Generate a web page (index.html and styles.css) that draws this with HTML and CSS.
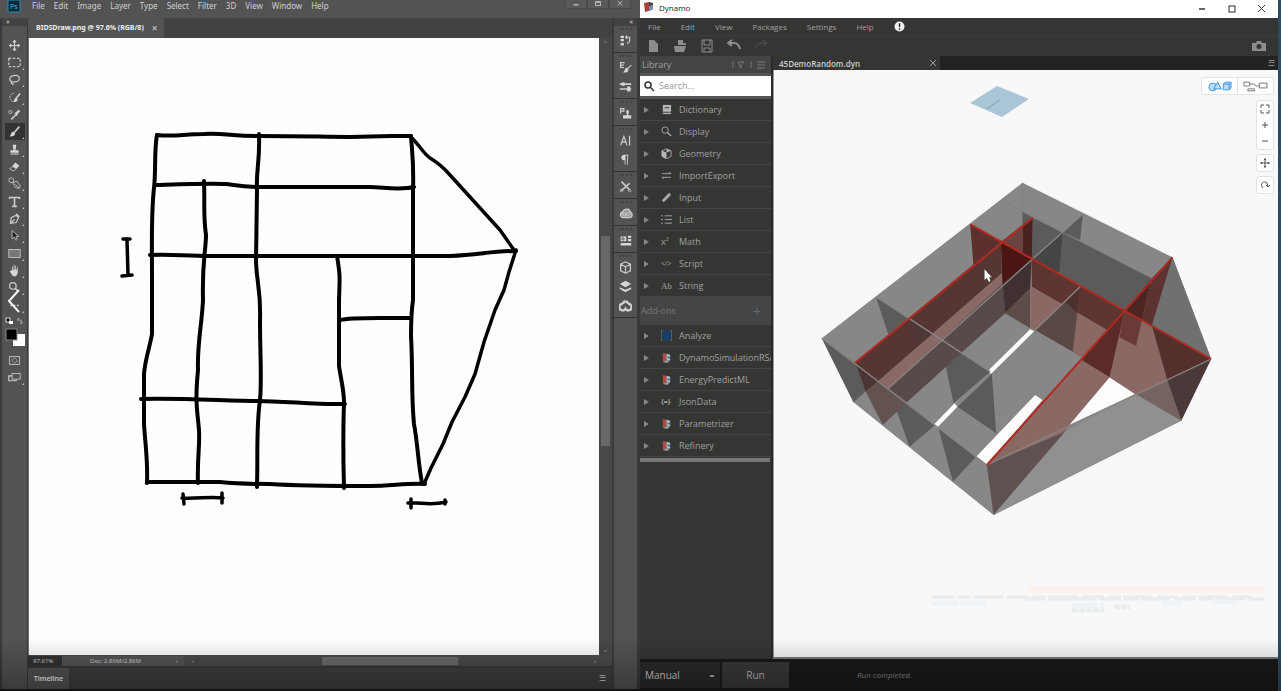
FILE: index.html
```
<!DOCTYPE html>
<html lang="en">
<head>
  <meta charset="UTF-8">
  <title>BIDSDraw.png / Dynamo</title>
  <link rel="stylesheet" href="styles.css">
</head>
<body>
  <div class="desktop">

    <!-- Photoshop -->
    <section class="ps">
      <header class="ps-header">
        <svg class="ps-logo" viewBox="0 0 14 14"><rect x="1" y="0" width="12" height="12" rx="1" fill="#0a2a3c" stroke="#2f86ab"/><text x="3" y="9" font-size="7" fill="#4fb4dd">Ps</text></svg>
        <nav class="ps-menu">
          <button>File</button><button>Edit</button><button>Image</button><button>Layer</button><button>Type</button><button>Select</button><button>Filter</button><button>3D</button><button>View</button><button>Window</button><button>Help</button>
        </nav>
        <div class="ps-window">
          <button aria-label="Minimize"><svg viewBox="0 0 10 10"><path d="M2 6h6" stroke-width="1.5"/></svg></button>
          <button aria-label="Maximize"><svg viewBox="0 0 10 10"><rect x="2" y="2" width="6" height="5"/><path d="M2 3h6"/></svg></button>
          <button aria-label="Close"><svg viewBox="0 0 10 10"><path d="M2 1l6 6M8 1l-6 6"/></svg></button>
        </div>
      </header>

      <div class="ps-body">
        <div class="ps-tools">
          <div class="grip">&raquo;</div>
          <button aria-label="Move"><svg class="ico" viewBox="0 0 16 16"><path d="M8 2v12M2 8h12M6 4l2-2 2 2M6 12l2 2 2-2M4 6L2 8l2 2M12 6l2 2-2 2" stroke-width="1.5"/></svg></button>
          <button aria-label="Marquee" class="more"><svg class="ico" viewBox="0 0 16 16"><rect x="1" y="3" width="14" height="10" stroke-dasharray="3 2" stroke-width="1.5"/></svg></button>
          <button aria-label="Lasso" class="more"><svg class="ico" viewBox="0 0 16 16"><path d="M5 11C0 9 2 3 9 3c6 0 7 7 0 8-3 0-5-1-5 1s3 0 2 3" stroke-width="1.5"/></svg></button>
          <button aria-label="Quick selection" class="more"><svg class="ico" viewBox="0 0 16 16"><path d="M7 3C1 2 1 12 6 13" stroke-dasharray="2 1"/><path d="M15 3l-5 6" stroke-width="2"/><path class="f" d="M10 8l2 2c-1 4-4 4-6 3 2-1 2-4 4-5z"/></svg></button>
          <button aria-label="Eyedropper"><svg class="ico" viewBox="0 0 16 16"><circle cx="3" cy="5" r="2"/><path d="M4 14l6-6" stroke-width="2"/><path class="f" d="M8 6l2-1 3-3 2 2-3 3-1 3z"/></svg></button>
          <button aria-label="Brush" class="more on"><svg class="ico" viewBox="0 0 16 16"><path d="M14 2L8 9" stroke-width="2"/><path class="f" d="M7 8l2 2c-1 4-4 4-7 4 2-2 2-6 5-6z"/></svg></button>
          <button aria-label="Stamp" class="more"><svg class="ico" viewBox="0 0 16 16"><path class="f" d="M6 2h4v3l-1 4h4v3H3V9h4L6 5zM3 13h10v1H3z"/></svg></button>
          <button aria-label="Eraser" class="more"><svg class="ico" viewBox="0 0 16 16"><path class="f" d="M9 3l5 4-4 4-5-3z"/><path d="M5 8l-3 3 3 2h3l2-2"/></svg></button>
          <button aria-label="Paint" class="more"><svg class="ico" viewBox="0 0 16 16"><circle cx="4" cy="4" r="3"/><path d="M6 7l5-2 4 6-1 3-5-1zM9 9l4 4"/></svg></button>
          <button aria-label="Type" class="more"><svg class="ico" viewBox="0 0 16 16"><path d="M2 5V3h12v2M8 3v11M5 14h6" stroke-width="2"/></svg></button>
          <button aria-label="Pen" class="more"><svg class="ico" viewBox="0 0 16 16"><path d="M3 14l1-7 6-3 3 3-3 6zM3 14l5-5M10 2l4 4" stroke-width="1.5"/></svg></button>
          <button aria-label="Path selection" class="more"><svg class="ico" viewBox="0 0 16 16"><path d="M5 2v10l3-2 2 4 1-1-1-4h3z" fill="#222"/></svg></button>
          <button aria-label="Rectangle" class="more"><svg class="ico" viewBox="0 0 16 16"><rect x="1" y="3" width="14" height="10" fill="#777"/></svg></button>
          <button aria-label="Hand" class="more"><svg class="ico" viewBox="0 0 16 16"><path class="f" d="M5 8V3h1v4h1V1h1v6h1V2h1v5h1V4h1v7l-2 4H6L2 9l1-1z"/></svg></button>
          <button aria-label="Zoom" class="more"><svg class="ico" viewBox="0 0 16 16"><circle cx="6" cy="6" r="4" stroke-width="1.5"/><path d="M9 9l4 4" stroke-width="2"/></svg></button>
          <button aria-label="Edit toolbar" class="more"><svg class="ico" viewBox="0 0 16 16"><path class="f" d="M3 7h2v2H3zM7 7h2v2H7zM11 7h2v2h-2z"/></svg></button>
          <svg class="swatches" viewBox="0 0 24 30"><rect x="3" y="1" width="4" height="4" fill="#000" stroke="#ddd"/><rect x="6" y="4" width="4" height="3" fill="#fff"/><path d="M14 3h4v4M14 3l2-2M18 7l2-2" fill="none" stroke="#aaa"/><rect x="10" y="17" width="12" height="12" fill="#fff"/><rect x="3" y="12" width="11" height="11" fill="#000" stroke="#888"/></svg>
          <button aria-label="Quick mask"><svg class="ico" viewBox="0 0 16 16"><rect x="2" y="3" width="12" height="10"/><circle cx="8" cy="8" r="3" stroke-dasharray="2 1"/></svg></button>
          <button aria-label="Screen mode" class="more"><svg class="ico" viewBox="0 0 16 16"><rect x="5" y="3" width="10" height="7"/><path d="M5 6H1v6h9v-2" stroke-width="1.5"/></svg></button>
          <svg class="chevron" viewBox="0 0 14 26"><path d="M12 2L2 13l10 11"/></svg>
        </div>

        <div class="ps-doc">
          <div class="ps-tabs"><div class="ps-tab">BIDSDraw.png @ 97.6% (RGB/8) <button aria-label="Close document">&times;</button></div></div>
          <div class="ps-canvas-row">
            <div class="ps-canvas">
              <svg class="sketch" viewBox="29 38 570 617">
                <path d="M157 135C174 137 184 134 204 134C224 133 232 136 258 136C310 136 322 137 350 137L392 136L411 136"/>
                <path d="M157 135C154 150 156 172 154 188C151 214 152 240 152 280L152 334C150 346 145 360 144 374L144 424C145 442 148 460 147 483"/>
                <path d="M155 185C186 184 210 183 226 184C240 186 244 187 260 187L370 187C390 188 402 190 414 187"/>
                <path d="M150 255C172 254 184 256 212 256L450 256C480 255 490 251 516 251"/>
                <path d="M204 181C205 206 203 214 206 235C206 250 202 260 203 300C202 324 197 344 198 370C195 402 197 408 199 430C200 446 197 460 198 483"/>
                <path d="M259 134C260 164 256 168 257 190L256 262C257 286 261 290 260 320C260 354 262 380 260 400C256 428 258 452 257 487"/>
                <path d="M337 256C340 274 340 276 339 300L339 366C341 380 344 390 344 402C343 430 343 452 344 488"/>
                <path d="M411 136C412 152 414 162 413 190L413 300C411 314 411 322 411 336C413 370 411 394 414 424C418 446 418 462 422 483"/>
                <path d="M340 320C350 317 372 318 410 318"/>
                <path d="M141 399C184 398 228 401 256 401C286 401 316 405 345 404"/>
                <path d="M147 482L220 482C240 484 250 484 270 484C300 486 340 486 370 486C392 486 406 483 425 484"/>
                <path d="M411 137C420 146 424 154 430 158C440 164 444 168 450 175L500 230L514 250" stroke-width="3.5"/>
                <path d="M516 250L509 272L504 290L495 310L484 342L475 374L465 397L452 422L443 444L431 468L424 484" stroke-width="3.5"/>
                <path d="M123 239l7 0M127 240l1 34M122 276l10-1" stroke-width="3.5"/>
                <path d="M183 494l1 10M222 493l0 10M182 498C198 499 210 496 223 498" stroke-width="3.5"/>
                <path d="M411 499l0 9M445 500l0 4M408 503C420 502 430 506 446 502" stroke-width="3.5"/>
              </svg>
            </div>
            <div class="ps-vscroll"><span>&#8963;</span><i></i><span>&#8964;</span></div>
          </div>
          <div class="ps-status">
            <span class="zoom">97.61%</span><span class="size">Doc: 2.86M/2.86M</span><span class="arrow">&rsaquo;</span><span>&lsaquo;</span>
            <div class="track"><i></i></div><span>&rsaquo;</span>
          </div>
          <div class="ps-timeline"><button>Timeline</button><span>&#9776;</span></div>
        </div>

        <div class="ps-dock">
          <div class="grip right">&laquo;</div>
          <div class="dock-group"><svg class="ico" viewBox="0 0 16 16"><path class="f" d="M2 2h4v3H2zM2 6h4v3H2zM2 11h4v3H2z"/><path d="M8 4h5v5l-3 3M8 4l2-2M8 4l2 2" stroke-width="1.5"/></svg></div>
          <div class="dock-group"><svg class="ico" viewBox="0 0 16 16"><path d="M7 2H2v6h4M2 5h4M15 5l-5 5" stroke-width="1.5"/><path class="f" d="M9 8l3 3c-2 4-4 3-7 3 2-1 2-5 4-6z"/></svg><svg class="ico" viewBox="0 0 16 16"><path d="M1 5h14M1 11h14" stroke-width="2"/><path class="f" d="M3 3h4v4H3zM10 8h4v6h-4z"/></svg></div>
          <div class="dock-group"><svg class="ico" viewBox="0 0 16 16"><path d="M2 8V2h4v3H2" stroke-width="1.5"/><path class="f" d="M9 4h3v3l-1 3h4v4H5v-4h5L9 7z"/></svg></div>
          <div class="dock-group"><svg class="ico" viewBox="0 0 16 16"><path d="M2 14L6 3l4 11M4 10h5M13 2v12" stroke-width="1.5"/></svg><svg class="ico" viewBox="0 0 16 16"><path class="f" d="M12 2H7C1 2 2 9 7 9v5h1V3h2v11h1V3h1z"/></svg></div>
          <div class="dock-group"><svg class="ico" viewBox="0 0 16 16"><path d="M3 2l10 10M13 4L3 13" stroke-width="2"/><circle cx="3" cy="13" r="1.5"/><circle cx="13" cy="13" r="1.5"/></svg></div>
          <div class="dock-group"><svg class="ico wide" viewBox="0 0 16 16"><path d="M5 13C0 13 0 7 4 6c2-5 9-4 9 0 4 2 3 7-1 7z" fill="#999" stroke-width="1.5"/><circle cx="6" cy="9" r="2"/><circle cx="10" cy="9" r="2"/></svg></div>
          <div class="dock-group"><svg class="ico" viewBox="0 0 16 16"><path class="f" d="M2 3h7v6H2zM11 2h4v3h-4zM11 6h4v3h-4zM2 11h13v3H2z"/><circle cx="5" cy="6" r="1.5" stroke="#444"/></svg></div>
          <div class="dock-group"><svg class="ico" viewBox="0 0 16 16"><path d="M8 1l6 3v8l-6 3-6-3V4zM2 4l6 3 6-3M8 7v8" stroke-width="1.5"/></svg><svg class="ico" viewBox="0 0 16 16"><path class="f" d="M8 1l7 4-7 4-7-4zM1 9l7 3 7-3v2l-7 4-7-4z"/></svg><svg class="ico" viewBox="0 0 16 16"><path d="M5 6a3 3 0 0 1 6 0M5 6a4 4 0 1 0 3 6 4 4 0 1 0 3-6" stroke-width="3"/></svg></div>
        </div>
      </div>
    </section>

    <!-- Dynamo -->
    <section class="dyn">
      <header class="dyn-title">
        <svg class="brand" viewBox="0 0 10 10"><path d="M0 1l5-1v9l-4 1z" fill="#a5403c"/><path d="M5 0l4 1v6L5 9z" fill="#444"/><path d="M5 4l4-1v4L5 9z" fill="#6f91a8"/></svg>
        <span>Dynamo</span>
        <div class="dyn-window">
          <button aria-label="Minimize"><svg viewBox="0 0 10 10"><path d="M2 5h6" stroke-width="1.5"/></svg></button>
          <button aria-label="Maximize"><svg viewBox="0 0 10 10"><rect x="2" y="2" width="6" height="6"/></svg></button>
          <button aria-label="Close"><svg viewBox="0 0 10 10"><path d="M1 1l7 7M8 1L1 8"/></svg></button>
        </div>
      </header>
      <nav class="dyn-menu">
        <button>File</button><button>Edit</button><button>View</button><button>Packages</button><button>Settings</button><button>Help</button>
        <svg viewBox="0 0 12 12"><circle cx="6" cy="6" r="5.5" fill="#eee"/><path d="M6 2.500v4M6 8v1.500" stroke="#222" stroke-width="1.500"/></svg>
      </nav>
      <div class="dyn-toolbar">
        <button aria-label="New"><svg class="tb" viewBox="0 0 14 14"><path d="M3 1h5l4 4v8H3z"/></svg></button>
        <button aria-label="Open"><svg class="tb" viewBox="0 0 14 14"><path d="M5 1h5v3h3v2H5zM1 7h12l-2 6H2z"/></svg></button>
        <button aria-label="Save"><svg class="tb line" viewBox="0 0 14 14"><path d="M2 1h10v12H2zM4 1v5h6V1M4 13V9h6v4"/></svg></button>
        <button aria-label="Undo"><svg class="tb line" viewBox="0 0 14 14"><path d="M5 1L1 4l4 3M2 4h5c3 0 5 2 6 6" stroke-width="2"/></svg></button>
        <button aria-label="Redo" disabled><svg class="tb line" viewBox="0 0 14 14"><path d="M9 1l4 3-4 3M12 4H7C4 4 2 6 1 10"/></svg></button>
        <button aria-label="Export image" class="camera"><svg class="tb" viewBox="0 0 14 12"><path d="M0 3h4l1-2h4l1 2h4v8H0z"/><circle cx="7" cy="6.500" r="2.500" fill="#333"/></svg></button>
      </div>

      <div class="dyn-main">
        <aside class="library">
          <div class="lib-head"><span>Library</span><svg viewBox="0 0 36 10"><path d="M2 1v7M20 1v7M7 2h6l-3 3v3zM26 2h8M26 5h8M26 8h8"/></svg></div>
          <label class="lib-search"><svg viewBox="0 0 12 12"><circle cx="5" cy="5" r="3"/><path d="M7 7l4 4"/></svg><input type="text" placeholder="Search..." aria-label="Search"></label>
          <ul>
            <li><svg class="lib" viewBox="0 0 12 12"><path class="f" d="M2 1h9v10H2z"/><path d="M4 4h5M2 9h9" stroke="#333"/></svg>Dictionary</li>
            <li><svg class="lib" viewBox="0 0 12 12"><circle cx="4.500" cy="4.500" r="3.500"/><path d="M7 7l4 4" stroke-width="1.500"/></svg>Display</li>
            <li><svg class="lib" viewBox="0 0 12 12"><path d="M6 1l5 2v6l-5 3-5-3V3z"/><path class="f" d="M1 3l5 2v7L1 9zM6 1l5 2-5 2z"/></svg>Geometry</li>
            <li><svg class="lib" viewBox="0 0 12 12"><path d="M1 4h10L9 2M11 8H1l2 2"/></svg>ImportExport</li>
            <li><svg class="lib" viewBox="0 0 12 12"><path d="M2 10l8-8" stroke-width="3"/></svg>Input</li>
            <li><svg class="lib" viewBox="0 0 12 12"><path d="M0 2h2M4 2h8M0 6h2M4 6h8M0 10h2M4 10h8"/></svg>List</li>
            <li><span class="glyph">x&sup2;</span>Math</li>
            <li><span class="glyph small">&lt;/&gt;</span>Script</li>
            <li><span class="glyph serif">Ab</span>String</li>
          </ul>
          <div class="addons"><span>Add-ons</span><button aria-label="Add package">+</button></div>
          <ul>
            <li><svg class="lib" viewBox="0 0 12 12"><path d="M2 1h8v10H2z" fill="#173d6b" stroke="none"/><path d="M2 0H0v12h2M10 0h2v12h-2" stroke="#5b8fc0"/></svg>Analyze</li>
            <li><svg class="lib" viewBox="0 0 12 12"><use href="#pkg"/></svg>DynamoSimulationRSA</li>
            <li><svg class="lib" viewBox="0 0 12 12"><g id="pkg" stroke="none"><path d="M2 1l4 1v6l-4 3z" fill="#b04a45"/><path d="M6 2l4 1v6H6z" fill="#b9bec2"/><path d="M7 5h3v2H7z" fill="#3c6fa0"/><path d="M2 11l3-2h5l-3 3z" fill="#999"/></g></svg>EnergyPredictML</li>
            <li><span class="glyph small bold">{=}</span>JsonData</li>
            <li><svg class="lib" viewBox="0 0 12 12"><use href="#pkg"/></svg>Parametrizer</li>
            <li><svg class="lib" viewBox="0 0 12 12"><use href="#pkg"/></svg>Refinery</li>
          </ul>
          <div class="lib-hscroll"></div>
        </aside>

        <div class="workspace">
          <div class="ws-tabs"><div class="ws-tab">45DemoRandom.dyn<button aria-label="Close workspace"><svg viewBox="0 0 8 8"><path d="M1 1l6 6M7 1L1 7"/></svg></button></div><span>&#9776;</span></div>
          <div class="viewport">
            <svg class="plane" viewBox="0 0 60 32"><path d="M0 17L27 0l32 13-27 18z" fill="#aac6d6"/><path d="M17 23l13-9" stroke="#7d9ba5"/></svg>
            <!-- drawn at three units per pixel -->
            <svg class="model" viewBox="0 0 1220 1080">
              <path fill="#878787" d="M35 505L637 38l450 224 116 305-90 185-563 283-420-338z"/>
              <g fill="#fdfdfd">
                <path d="M370 765l63-65 9 10-60 62zM533 603l127-125 12 6-129 127zM498 860l177-185 22 15-167 195zM898 622l77 50-198 93z"/>
              </g>
              <g fill="#5b5b5b">
                <path d="M35 505l100 73 32 86-37 33zM197 380l98 63-60 52zM390 510l150 95-110 95zM545 612l13 178-116-80zM235 655l140 110-77 65zM385 775l113 85-70 75z"/>
                <path d="M668 143l90 45-93 80zM758 188l267 137-82 98-195-113zM818 132l-8 78-52-22zM637 125l31 18-31 22z"/>
              </g>
              <path fill="#454545" d="M758 188l-10 122-83-42z"/>
              <path fill="#707070" d="M1087 262l116 305-178-100z"/>
              <path fill="#563633" d="M135 578l437-363 3 95-370 323z"/>
              <path fill="#4f3937" d="M300 448l90 62-63 50z"/>
              <path fill="#896966" d="M205 633l370-323 3 30-343 315z"/>
              <path fill="#584a48" d="M235 655l343-315 7 90-295 267z"/>
              <path fill="#4c3432" d="M135 578l70 55-38 32z"/>
              <path fill="#625250" d="M205 633l85 64-72 68-51-100z"/>
              <path fill="#5e302d" d="M480 163l92 52-82 70z"/>
              <path fill="#6b4441" d="M572 215l65-50v88z"/>
              <path fill="#4b2220" d="M637 165l31-22-3 125-28-15z"/>
              <path fill="#491613" d="M572 215l93 53-88 76z"/>
              <path fill="#40302f" d="M577 340l88-72-5 87-75 75z"/>
              <path fill="#5c4d4b" d="M585 430l75-75v120z"/>
              <path fill="#5e3531" d="M665 268l278 155-15 79-263-152z"/>
              <path fill="#8a6965" d="M662 350l138 77 128 75-30 120-110-77-113-65-13-5z"/>
              <path fill="#5a4846" d="M810 350l-22 195-113-65z"/>
              <path fill="#4b302e" d="M810 350l-10 77-35-30z"/>
              <path fill="#8a6965" d="M943 423l82 44 47 166-97 39-77-50z"/>
              <path fill="#693a36" d="M943 423l52 28-17 77-50-26z"/>
              <path fill="#5a2b27" d="M943 423l-45 199-85-52z"/>
              <path fill="#8a6965" d="M530 885l283-315 85 52-121 143-12 20z"/>
              <path fill="#5f5150" d="M530 885l235-100-215 250z"/>
              <path fill="#5c3330" d="M1087 262l-62 205-30-17 30-125z"/>
              <path fill="#4d2623" d="M1025 325l-82 98 52 28z"/>
              <path fill="#54302d" d="M1025 467l178 100-131 66z"/>
              <path fill="#4b3939" d="M1203 567l-90 185-41-119z"/>
              <path fill="#756361" d="M975 672l97-39 41 119z"/>
              <path fill="#909090" d="M550 1035l215-250 210-113 138 80z"/>
              <g class="edge">
                <path d="M235 655l583-523M197 380l343 225M35 505l495 380M810 350L675 480M530 885l673-318"/>
              </g>
              <path class="edge faint" d="M575 92l450 233M637 38v87M575 92v123M675 480v195"/>
              <g class="cut">
                <path d="M135 578l533-435M480 163l723 404M530 885l557-623"/>
              </g>
              <path d="M523 298v32l7-6 6 12 5-3-4-11h8z" fill="#fff" stroke="#333" stroke-width="3" paint-order="stroke"/>
            </svg>
            <svg class="nodes" viewBox="0 0 334 32">
              <rect x="97" y="1" width="235" height="7" fill="#fbf2ed"/>
              <path d="M0 12h320M92 14h240" stroke="#e8ecef" stroke-width="3" stroke-dasharray="22 3 14 2 30 4"/>
              <path d="M0 18h55M140 20h32M230 18h20M280 17h25" stroke="#f0f3f5" stroke-width="5" stroke-dasharray="26 2"/>
              <path d="M140 25h32M182 22h16" stroke="#e9eeed" stroke-width="5" stroke-dasharray="6 1"/>
            </svg>
            <div class="mode">
              <button class="active" aria-label="3D preview"><svg viewBox="0 0 26 12"><circle cx="6" cy="7" r="4"/><path d="M7 9l4-7 4 7zM17 4l2-2h6v6l-2 2h-6zM17 4h6v6M23 4l2-2"/></svg></button>
              <button aria-label="Graph view"><svg viewBox="0 0 26 12"><path d="M1 2h6v4H1zM17 3h8v5h-8zM5 9h7v2H5zM7 4h4l3 2h3"/></svg></button>
            </div>
            <div class="nav">
              <div>
                <button aria-label="Fit"><svg viewBox="0 0 10 10"><path d="M1 4V1h3M6 1h3v3M9 6v3H6M4 9H1V6"/></svg></button>
                <button aria-label="Zoom in"><svg viewBox="0 0 10 10"><path d="M5 2v6M2 5h6"/></svg></button>
                <button aria-label="Zoom out"><svg viewBox="0 0 10 10"><path d="M2 5h6"/></svg></button>
              </div>
              <div><button aria-label="Pan"><svg viewBox="0 0 10 10"><path d="M5 0v10M0 5h10M4 2l1-1 1 1M4 8l1 1 1-1M2 4L1 5l1 1M8 4l1 1-1 1"/></svg></button></div>
              <div><button aria-label="Orbit"><svg viewBox="0 0 10 10"><path d="M3 8C-1 4 4 0 7 3l1 3M6 5l2 2 2-2"/></svg></button></div>
            </div>
          </div>
        </div>
      </div>

      <footer class="dyn-run">
        <select aria-label="Run mode"><option>Manual</option></select>
        <button>Run</button>
        <span>Run completed.</span>
      </footer>
    </section>
  </div>
  <div class="shade"></div>
</body>
</html>
```
FILE: styles.css
```
* {
  box-sizing: border-box;
}
body {
  margin: 0;
  background: #2e4a60;
  color: #d0d0d0;
  font: 8px/12px "Noto Sans", "Open Sans", sans-serif;
  overflow: hidden;
}
button, select, input {
  background: none;
  border: 0;
  color: inherit;
  font: inherit;
  margin: 0;
  padding: 0;
}
svg {
  display: block;
  flex: none;
  fill: none;
}
i {
  display: block;
}
.desktop {
  display: flex;
  height: 100vh;
  padding-right: 3px;
}

/* Photoshop */
.ps {
  background: #424242;
  border-bottom: 2px solid #1c1c1c;
  display: flex;
  flex: 1 1 2px;
  flex-direction: column;
  min-width: 0;
}
.ps-header {
  align-items: flex-start;
  background: #535353;
  display: flex;
  height: 18px;
  padding-left: 7px;
}
.ps-logo {
  height: 14px;
  width: 14px;
}
.ps-menu {
  display: flex;
  flex: 1;
  gap: 9px;
  padding-left: 11px;
}
.ps-window {
  background: #5a5a5a;
  display: flex;
  margin-right: 9px;
}
.ps-window button {
  border: 1px solid #4a4a4a;
  border-top: 0;
  height: 9px;
  padding: 0 5px;
}
.ps-window svg {
  height: 8px;
  stroke: #ccc;
  width: 10px;
}
.ps-body {
  display: flex;
  flex: 1;
  min-height: 0;
}
.ps-tools, .ps-dock {
  align-items: center;
  background: #535353;
  border: 1px solid #3a3a3a;
  border-width: 0 1px 0 2px;
  display: flex;
  flex-direction: column;
  position: relative;
  width: 28px;
}
.ps-dock {
  border-right-width: 3px;
}
.grip {
  align-self: stretch;
  background: #424242;
  font-size: 7px;
  height: 8px;
  line-height: 7px;
  padding: 0 4px;
}
.grip.right {
  text-align: right;
}
.ps-tools .grip {
  margin-bottom: 11px;
}
.ps-tools button {
  height: 17px;
  padding: 2px 6px;
  position: relative;
  width: 20px;
}
.ps-tools button:nth-of-type(3n) {
  margin-bottom: 1px;
}
.ps-tools button.on {
  background: #333;
}
.ps-tools .more::after {
  border: 1px solid #bbb;
  border-color: transparent #bbb #bbb transparent;
  bottom: 1px;
  content: "";
  position: absolute;
  right: 1px;
}
.ico {
  height: 13px;
  stroke: #ccc;
  width: 13px;
}
.ico.wide {
  width: 16px;
}
.ps-tools .ico {
  margin-left: -3px;
}
.ico .f {
  fill: #d6d6d6;
  stroke: none;
}
.swatches {
  height: 30px;
  margin: 3px 0 5px;
  width: 24px;
}
.chevron {
  height: 26px;
  left: 5px;
  position: absolute;
  stroke: #f4f4f4;
  stroke-width: 2;
  top: 270px;
  width: 14px;
}
.ps-doc {
  display: flex;
  flex: 1;
  flex-direction: column;
  min-width: 0;
}
.ps-tabs {
  display: flex;
  height: 20px;
}
.ps-tab {
  align-items: center;
  background: #535353;
  color: #eee;
  display: flex;
  font-size: 7px;
  font-weight: bold;
  gap: 8px;
  padding: 0 6px 0 8px;
}
.ps-tab button {
  color: #bbb;
  font-size: 10px;
}
.ps-canvas-row {
  display: flex;
  flex: 1;
  min-height: 0;
}
.ps-canvas {
  background: #fefefe;
  border-left: 1px solid #777;
  flex: 1;
  overflow: hidden;
}
.sketch {
  height: 617px;
  stroke: #000;
  stroke-linecap: round;
  stroke-linejoin: round;
  stroke-width: 4;
  width: 570px;
}
.ps-vscroll {
  align-items: center;
  background: #484848;
  color: #888;
  display: flex;
  flex-direction: column;
  width: 13px;
}
.ps-vscroll i {
  background: #686868;
  height: 210px;
  margin: 186px 0 auto;
  width: 9px;
}
.ps-status {
  align-items: center;
  background: #4b4b4b;
  display: flex;
  font-size: 6px;
  height: 11px;
  line-height: 10px;
}
.ps-status .zoom {
  background: #333;
  padding: 0 5px;
  width: 34px;
}
.ps-status .size {
  background: #555;
  padding-left: 28px;
  width: 114px;
}
.ps-status .arrow {
  background: #555;
  margin-right: 8px;
  width: 8px;
}
.track {
  flex: 1;
}
.track i {
  background: #6b6b6b;
  height: 8px;
  margin-left: 32%;
  width: 34%;
}
.ps-status span:last-child {
  margin-right: 16px;
}
.ps-timeline {
  background: #3f3f3f;
  border-top: 2px solid #383838;
  display: flex;
  height: 23px;
  justify-content: space-between;
  line-height: 20px;
  padding-right: 6px;
}
.ps-timeline button {
  background: #535353;
  color: #eee;
  font-size: 7px;
  font-weight: 600;
  width: 41px;
}
.dock-group {
  align-items: center;
  align-self: stretch;
  border-bottom: 1px solid #333;
  display: flex;
  flex-direction: column;
  gap: 6px;
  padding: 8px 0 5px;
  position: relative;
}
.dock-group::before {
  border-top: 2px dotted #444;
  content: "";
  left: 5px;
  position: absolute;
  right: 5px;
  top: 2px;
}

/* Dynamo */
.dyn {
  background: #353534;
  color: #a0a0a0;
  display: flex;
  flex: 1 1 0;
  flex-direction: column;
  font-family: "Open Sans", sans-serif;
  min-width: 0;
}
.dyn-title {
  background: #fff;
  color: #222;
  display: flex;
  gap: 5px;
  height: 18px;
  line-height: 15px;
  padding: 0 11px 0 4px;
}
.brand {
  height: 10px;
  margin-top: 2px;
  width: 10px;
}
.dyn-window {
  display: flex;
  gap: 20px;
  margin-left: auto;
}
.dyn-window svg {
  height: 10px;
  stroke: #333;
  width: 10px;
}
.dyn-menu {
  align-items: center;
  display: flex;
  gap: 20px;
  height: 17px;
  padding-left: 8px;
}
.dyn-menu svg {
  height: 11px;
  width: 11px;
}
.dyn-toolbar {
  align-items: center;
  border-top: 1px solid #3c3c3c;
  display: flex;
  gap: 13px;
  height: 21px;
  padding: 0 12px 0 6px;
}
.tb {
  fill: #8c8c8c;
  height: 14px;
  width: 14px;
}
.tb.line {
  fill: none;
  stroke: #8c8c8c;
}
.dyn-toolbar button:disabled {
  opacity: .35;
}
.camera {
  margin-left: auto;
}
.dyn-main {
  display: flex;
  flex: 1;
  min-height: 0;
}
.library {
  border-right: 2px solid #2a2a2a;
  flex: none;
  font-size: 9px;
  overflow: hidden;
  width: 133px;
}
.lib-head {
  align-items: center;
  background: #444;
  display: flex;
  height: 17px;
  justify-content: space-between;
  padding: 0 4px 0 2px;
}
.lib-head svg {
  height: 10px;
  stroke: #777;
  width: 36px;
}
.lib-search {
  align-items: center;
  background: #fff;
  border: 1px solid #555;
  border-width: 3px 0;
  display: flex;
  height: 26px;
  padding-left: 3px;
}
.lib-search svg {
  height: 12px;
  stroke: #333;
  stroke-width: 1.5;
  width: 12px;
}
.lib-search input {
  flex: 1;
  min-width: 0;
  padding-left: 4px;
}
.lib-search input::placeholder {
  color: #999;
}
.library ul {
  list-style: none;
  margin: 0;
  padding: 0;
}
.library li {
  align-items: center;
  border-bottom: 1px solid #444;
  display: flex;
  height: 22px;
  white-space: nowrap;
}
.library li::before {
  border: 3px solid transparent;
  border-left: 5px solid #858585;
  border-right: 0;
  content: "";
  margin: 0 12px 0 4px;
}
.lib {
  height: 11px;
  margin-right: 7px;
  stroke: #aaa;
  width: 11px;
}
.lib .f {
  fill: #b5b5b5;
  stroke: none;
}
.glyph {
  flex: none;
  margin-right: 4px;
  width: 14px;
}
.glyph.small {
  font-size: 7px;
}
.glyph.bold {
  font-weight: bold;
}
.glyph.serif {
  font-family: "Liberation Serif", serif;
}
.addons {
  align-items: center;
  background: #454545;
  color: #777;
  display: flex;
  height: 28px;
  justify-content: space-between;
  padding: 0 10px 0 1px;
}
.addons button {
  color: #50717f;
  font-size: 15px;
}
.lib-hscroll {
  background: #777;
  height: 4px;
  margin-top: 1px;
  width: 130px;
}
.workspace {
  display: flex;
  flex: 1;
  flex-direction: column;
  min-width: 0;
}
.ws-tabs {
  background: #222;
  display: flex;
  height: 14px;
  justify-content: space-between;
  line-height: 13px;
  padding-right: 3px;
}
.ws-tab {
  align-items: center;
  background: #353534;
  color: #ccc;
  display: flex;
  font-weight: 600;
  justify-content: space-between;
  padding: 0 3px 0 6px;
  width: 167px;
}
.ws-tab svg {
  height: 8px;
  stroke: #999;
  width: 8px;
}
.viewport {
  background: #f8f8f8;
  border-bottom: 2px solid #777;
  border-left: 1px solid #999;
  flex: 1;
  overflow: hidden;
  position: relative;
}
.plane {
  height: 32px;
  left: 196px;
  position: absolute;
  top: 16px;
  width: 60px;
}
.model {
  height: 360px;
  left: 36px;
  position: absolute;
  top: 100px;
  width: 407px;
}
.edge {
  stroke: #8b8482;
  stroke-width: 4;
}
.edge.faint {
  stroke: #7e7e7e;
  stroke-width: 2;
}
.cut {
  stroke: #b02a20;
  stroke-width: 6;
}
.nodes {
  bottom: 40px;
  height: 32px;
  position: absolute;
  right: 12px;
  width: 334px;
}
.mode {
  background: #fff;
  border: 1px solid #e3e3e3;
  border-radius: 3px;
  display: flex;
  position: absolute;
  right: 4px;
  top: 7px;
}
.mode button {
  padding: 2px 5px;
}
.mode button + button {
  border-left: 1px solid #e3e3e3;
}
.mode svg {
  height: 12px;
  stroke: #777;
  width: 25px;
}
.mode .active svg {
  fill: #b9dcf8;
  stroke: #3b94dd;
}
.nav {
  display: flex;
  flex-direction: column;
  gap: 4px;
  position: absolute;
  right: 4px;
  top: 30px;
}
.nav div {
  background: #fff;
  border: 1px solid #e3e3e3;
  border-radius: 3px;
  display: flex;
  flex-direction: column;
}
.nav button {
  padding: 3px;
}
.nav svg {
  height: 10px;
  stroke: #555;
  width: 10px;
}
.dyn-run {
  background: #1a1a1a;
  display: flex;
  gap: 2px;
  height: 32px;
  line-height: 26px;
  padding: 3px 0;
}
.dyn-run select {
  appearance: none;
  background: linear-gradient(#aaa, #aaa) no-repeat 70px 13px / 4px 2px #2b2b2b;
  color: #ccc;
  font-size: 10px;
  padding-left: 5px;
  width: 80px;
}
.dyn-run button {
  background: #3a3a3a;
  color: #bbb;
  font-size: 10px;
  width: 67px;
}
.dyn-run span {
  color: #888;
  font-style: italic;
  padding-left: 66px;
}

/* darkening along the bottom of the recording */
.shade {
  background: linear-gradient(transparent, rgba(0, 0, 0, .3));
  bottom: 0;
  height: 52px;
  left: 0;
  pointer-events: none;
  position: fixed;
  right: 0;
}
```
